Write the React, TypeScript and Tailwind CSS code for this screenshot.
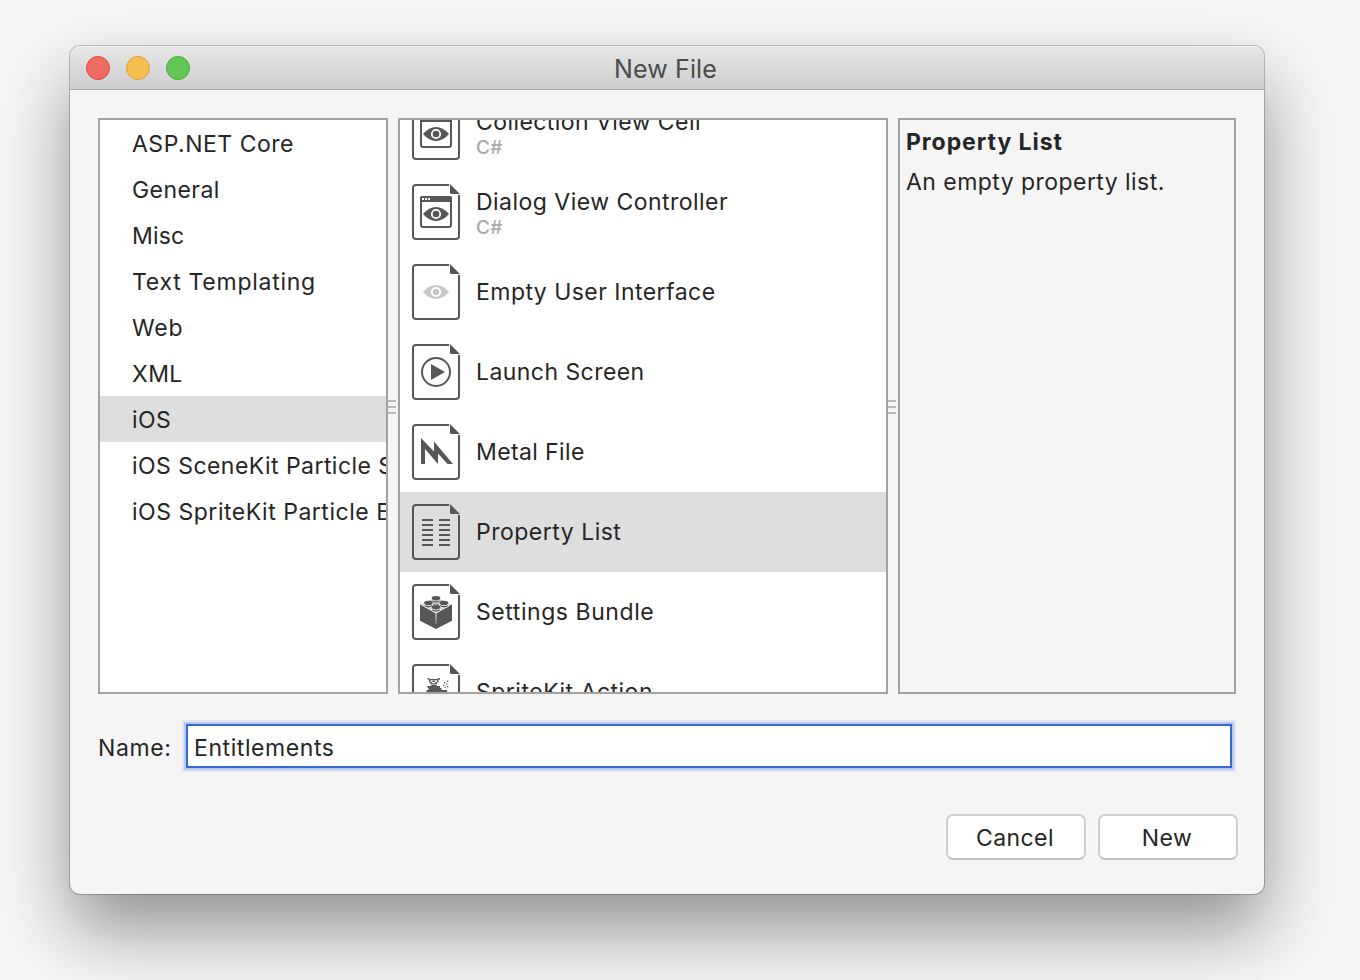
import type { ReactNode } from "react";

const INK = "#575757";

function Page({ children }: { children: ReactNode }) {
  return (
    <svg width="48" height="56" viewBox="0 0 48 56" className="block shrink-0" fill={INK}>
      <path d="M37 1H4Q1 1 1 4V52Q1 55 4 55H44Q47 55 47 52V11" fill="none" stroke={INK} strokeWidth="2" />
      <path d="M38 0L48 10H39.500Q38 10 38 8.500Z" />
      {children}
    </svg>
  );
}

function Eye({ y, color = INK }: { y: number; color?: string }) {
  return (
    <g transform={`translate(24 ${y})`}>
      <path d="M-13 0Q-7 -7 0 -7T13 0Q7 7 0 7T-13 0Z" fill={color} />
      <circle r="2.9" fill={color} />
      <circle r="4.2" fill="none" stroke="#fff" strokeWidth="1.8" />
    </g>
  );
}

function WindowEye() {
  return (
    <Page>
      <rect x="9" y="13" width="30" height="30" rx="2" fill="none" stroke={INK} strokeWidth="2" />
      <path d="M8 18V14Q8 12 10 12H38Q40 12 40 14V18Z" />
      <path d="M10 14h2v2h-2zM13 14h2v2h-2zM16 14h2v2h-2z" fill="#fff" />
      <Eye y={30} />
    </Page>
  );
}

function Play() {
  return (
    <Page>
      <circle cx="24" cy="28" r="14" fill="none" stroke={INK} strokeWidth="2" />
      <path d="M19 20L33 28L19 36Z" />
    </Page>
  );
}

function Metal() {
  return (
    <Page>
      <path d="M9 14L22 27.5V17.5L41 40H35.5L26 29.5V40L13 25V40H9Z" />
    </Page>
  );
}

function Plist() {
  return (
    <Page>
      <path d="M10 16H21M27 16H38M10 21H21M27 21H38M10 26H21M27 26H38M10 31H21M27 31H38M10 36H21M27 36H38M10 41H21M27 41H38" stroke={INK} strokeWidth="2" />
    </Page>
  );
}

function Stud({ x, y }: { x: number; y: number }) {
  return (
    <g transform={`translate(${x} ${y})`}>
      <path d="M-4.200 0V3.200A4.200 2 0 0 0 4.200 3.200V0Z" stroke="#fff" strokeWidth=".9" />
      <path d="M-4.200 1A4.200 2 0 0 0 4.200 1" fill="none" stroke="#fff" strokeWidth=".8" />
      <ellipse rx="4.300" ry="2" />
    </g>
  );
}

function Brick() {
  return (
    <Page>
      <path d="M8 20.300L24 29.500L40 20.300V36.700L24 45L8 36.700Z" />
      <path d="M23.500 29.500H24.500L24.200 40H23.800Z" fill="#fff" />
      <path d="M10 20L24 13.500L38 20L24 28Z" fill="#9a9a9a" />
      <Stud x={24} y={14} />
      <Stud x={16.400} y={18.700} />
      <Stud x={31.900} y={18.700} />
      <Stud x={24} y={23} />
    </Page>
  );
}

function Sprite() {
  return (
    <Page>
      <path d="M15.500 14H17.500V15H26V14H28V15.500H26.500V18.500H25V20.500H18.500V18.500H17V15.500H15.500Z" />
      <path d="M18.500 16.300H25V18H23.500V19.300H20V18H18.500Z" fill="#fff" />
      <path d="M20.500 16.500H23V18H20.500Z" />
      <path d="M19.500 21H24.500V22H28V24H29.500V26H35V40H14.500V26H16.500V24H15.500V22H19.500Z" />
      <path d="M35 16.500h1.300v1.300H35zM32 18h1.300v1.300H32zM34 19.500h1.300v1.300H34zM31 20.500h1.300v1.300H31zM32.500 22.500h1.300v1.300h-1.300zM35 22h1.300v1.300H35z" />
    </Page>
  );
}

const categories = [
  { name: "ASP.NET Core", fit: "tracking-[0.5px]" },
  { name: "General", fit: "tracking-[0.43px]" },
  { name: "Misc", fit: "tracking-[0.2px]" },
  { name: "Text Templating", fit: "tracking-[0.73px]" },
  { name: "Web", fit: "tracking-[0.75px]" },
  { name: "XML", fit: "tracking-[0.45px]" },
  { name: "iOS", fit: "tracking-[0.45px]", selected: true },
  { name: "iOS SceneKit Particle System", fit: "tracking-[0.45px]" },
  { name: "iOS SpriteKit Particle Effect", fit: "tracking-[0.52px]" },
];

const templates = [
  { name: "Collection View Cell", lang: "C#", icon: <WindowEye />, fit: "tracking-[0.43px]" },
  { name: "Dialog View Controller", lang: "C#", icon: <WindowEye />, fit: "tracking-[0.47px]" },
  { name: "Empty User Interface", icon: <Page><Eye y={28} color="#c8c8c8" /></Page>, fit: "tracking-[0.46px]" },
  { name: "Launch Screen", icon: <Play />, fit: "tracking-[0.44px]" },
  { name: "Metal File", icon: <Metal />, fit: "tracking-[0.38px]" },
  { name: "Property List", icon: <Plist />, selected: true, fit: "tracking-[0.5px]" },
  { name: "Settings Bundle", icon: <Brick />, fit: "tracking-[0.56px]" },
  { name: "SpriteKit Action", icon: <Sprite />, fit: "tracking-[0.5px]" },
];

function Splitter() {
  return (
    <div className="flex w-[10px] flex-col justify-center gap-1 pt-0.5">
      <div className="h-0.5 w-2 bg-[#b9b9b9]" />
      <div className="h-0.5 w-2 bg-[#b9b9b9]" />
      <div className="h-0.5 w-2 bg-[#b9b9b9]" />
    </div>
  );
}

export default function App() {
  return (
    <div className="h-[980px] w-[1360px] overflow-hidden bg-[#f5f5f5] pl-[70px] pt-[46px] font-['Inter',sans-serif] text-[23px] leading-[28px] text-[#262626]">
      <div className="flex h-[848px] w-[1194px] flex-col overflow-hidden rounded-[10px] bg-[#f5f5f5] shadow-[0_0_0_1px_rgba(0,0,0,0.22),0_36px_70px_rgba(0,0,0,0.4)]">
        <header className="grid h-[44px] shrink-0 grid-cols-[1fr_auto_1fr] items-center border-b border-[#a9a9a9] bg-linear-to-b from-[#e7e7e7] to-[#cecece] px-4 shadow-[inset_0_1px_0_#f4f4f4]">
          <div className="flex gap-4">
            <span className="size-6 rounded-full border border-[#e0493f] bg-[#ed6b60]" />
            <span className="size-6 rounded-full border border-[#dea03a] bg-[#f5bf4f]" />
            <span className="size-6 rounded-full border border-[#4eaa3d] bg-[#61c654]" />
          </div>
          <h1 className="pr-[3px] pt-0.5 text-[25px] tracking-[0.15px] text-[#4b4b4b]">New File</h1>
        </header>
        <main className="flex grow flex-col pl-7 pt-[28px]">
          <div className="flex h-[576px]">
            <ul className="w-[290px] overflow-hidden border-2 border-[#a2a2a2] bg-white">
              {categories.map((c) => (
                <li key={c.name} className={`flex h-[46px] items-center whitespace-nowrap pl-8 pt-0.5 ${c.fit} ${c.selected ? "bg-[#dedede]" : ""}`}>
                  {c.name}
                </li>
              ))}
            </ul>
            <Splitter />
            <div className="w-[490px] overflow-hidden border-2 border-[#a2a2a2] bg-white">
              <ul className="-mt-7">
                {templates.map((t) => (
                  <li key={t.name} className={`flex h-20 items-center gap-4 pl-3 ${t.selected ? "bg-[#dedede]" : ""}`}>
                    {t.icon}
                    <div className={t.lang ? "pt-0.5" : ""}>
                      <div className={t.fit}>{t.name}</div>
                      {t.lang && <div className="text-[19px] font-medium leading-[23px] tracking-[0.2px] text-[#a8a8a8]">{t.lang}</div>}
                    </div>
                  </li>
                ))}
              </ul>
            </div>
            <Splitter />
            <section className="w-[338px] border-2 border-[#a2a2a2] pl-[6px] pt-2">
              <h2 className="font-bold tracking-[0.95px]">Property List</h2>
              <p className="pt-3 tracking-[0.45px]">An empty property list.</p>
            </section>
          </div>
          <div className="mt-[30px] flex h-[44px] items-center">
            <label className="w-[88px] pt-[3px] tracking-[0.6px]">Name:</label>
            <div className="flex h-[44px] w-[1046px] items-center border-2 border-[#3568d4] bg-white pl-[6px] pt-[3px] tracking-[0.58px] shadow-[0_0_0_2px_#bccae9,0_0_0_4px_#e0e6f2]">
              Entitlements
            </div>
          </div>
          <div className="mt-[46px] flex gap-3 pl-[848px]">
            <button className="h-[46px] w-[140px] rounded-[7px] border-2 border-[#cfcfcf] border-b-[#c2c2c2] bg-white pr-0.5 pt-0.5 tracking-[0.4px]">Cancel</button>
            <button className="h-[46px] w-[140px] rounded-[7px] border-2 border-[#cfcfcf] border-b-[#c2c2c2] bg-white pr-0.5 pt-0.5 tracking-[0.4px]">New</button>
          </div>
        </main>
      </div>
    </div>
  );
}
